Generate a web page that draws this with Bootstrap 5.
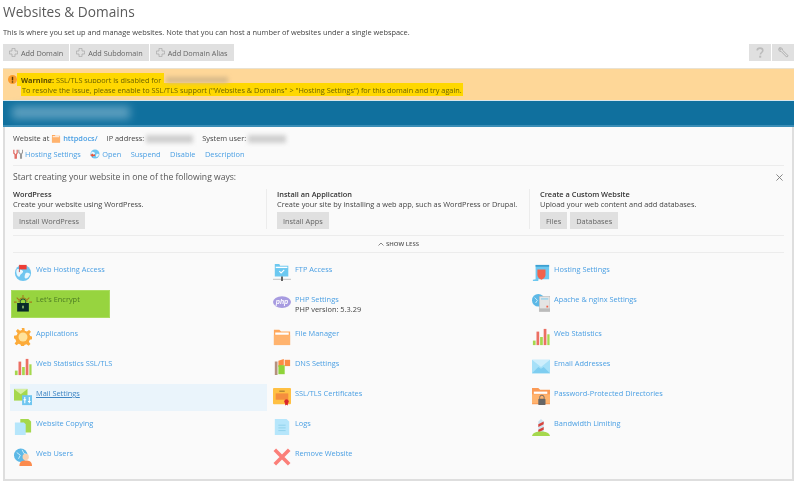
<!DOCTYPE html>
<html lang="en">
<head>
<meta charset="utf-8">
<title>Websites &amp; Domains</title>
<link href="https://cdn.jsdelivr.net/npm/bootstrap@5.3.0/dist/css/bootstrap.min.css" rel="stylesheet">
<style>
html,body{height:484px;overflow:hidden;background:#fff}
body{font-family:"Open Sans","Liberation Sans",sans-serif;font-size:7.4px;line-height:10px;color:#444}
.page-wrap{padding:0 6px 0 3px;filter:blur(.3px);height:484px}
a{color:#4a9fe3;text-decoration:none}
.page-title{font-size:13.7px;line-height:20px;font-weight:400;color:#5a5a5a;margin:2px 0 0}
.page-desc{margin:4px 0 0;line-height:12px}
.tool-row{margin-top:6px;height:17px;gap:1px}
.tool-btn{background:#e0e0e0;color:#666;height:17px;font-size:7.3px;line-height:10px;padding:0 6px;border:0;border-radius:0;display:inline-flex;align-items:center;gap:3px}
.tool-btn svg{flex:none}
.sq-btn{width:22px;justify-content:center;padding:0}
.warn-box{margin-top:7px;height:32px;background:#fed798;border-top:1px solid #e9e2d2;padding:5px 0 0 5px;gap:4px;font-size:7.35px}
.warn-ic{flex:none;margin-top:1px}
.warn-hl{background:#ffd800;color:#6d6300;padding:1.5px 1px}
.warn-first{padding-left:4px;margin-left:-4px}
.warn-lines{line-height:10.3px}
.warn-lines b{font-weight:700;color:#5a4a00}
.blue-bar{height:27px;background:#10709e;border-top:1px solid #d9e6ec;border-bottom:2px solid #3a8db6;padding:5px 0 0 9px}
.blur-name{display:inline-block;width:118px;height:13px;background:#7db3cd;filter:blur(4px);opacity:.7}
.blur-ip{display:inline-block;width:47px;height:8px;background:#cfcfcf;filter:blur(2px);vertical-align:middle}
.blur-usr{display:inline-block;width:38px;height:8px;background:#cfcfcf;filter:blur(2px);vertical-align:middle}
.blur-dom{display:inline-block;width:62px;height:6px;background:#d7b98a;filter:blur(2px);vertical-align:middle;margin-left:2px}
.main-panel{height:354px;background:#fafafa;border-left:2px solid #dedede;border-right:2px solid #dedede;border-bottom:2px solid #dedede;padding:0 8px;width:791px}
.info-row{height:12px;padding-top:5px;box-sizing:content-box;gap:9px;align-items:center}
.act-row{margin-top:4px;height:12px;gap:9.500px;align-items:center}
.act-row a,.info-row a{display:inline-flex;align-items:center;gap:2px}
.strong-link{font-weight:600}
.rule{border-top:1px solid #ececec;margin:5px 0 0;opacity:1}
.start-head{font-size:8.6px;line-height:12px;color:#555;margin:5px 0 0;height:12px}
.close-x{width:7px;height:7px;margin-right:1px;margin-top:3px}
.start-row{margin-top:6px;height:40px}
.start-col{padding:0;border-left:1px solid #ececec;padding-left:10px}
.start-col:first-child{border-left:0;padding-left:0}
.col-a{width:253px}.col-b{width:263px}.col-c{flex:1}
.start-col h6{font-size:7.4px;line-height:10px;font-weight:600;color:#333;margin:0}
.start-col p{margin:0;line-height:10px}
.soft-btn{background:#e0e0e0;color:#666;font-size:7.4px;line-height:10px;height:17px;padding:0 6px;border:0;border-radius:0;margin-top:3px;margin-right:3px}
.show-row{height:18px;border-top:1px solid #ececec;border-bottom:1px solid #ececec;margin-top:6px;font-size:6px;font-weight:600;color:#555;line-height:15px;gap:2px}
.tile-grid{margin:0 -3px;padding-top:5px}
.tile{height:30px;padding:6px 0 0 4px;display:flex;gap:4px;align-items:flex-start;line-height:10px}
.tile-tall{height:34px}
.tile svg{width:18px;height:18px;flex:none}
.tile-col{width:259.900px;padding-right:1px}
.tile-green{background:#97d43f;width:99px;margin-left:1px;height:28px;padding:3px 0 0 2px;margin-top:2px;margin-bottom:4px;border:1px solid #a9dc5f}
.tile-green a{color:#4c7b23}
.tile-hover{background:#eaf4fb;height:27px;padding-top:4px;margin:2px 1.500px 1px 0}
.tile-hover a{text-decoration:underline;color:#3f86c4}
</style>
</head>
<body>
<svg width="0" height="0" class="position-absolute">
<defs>
<symbol id="plus" viewBox="0 0 12 12"><path d="M4 .5h4v3.500h3.500v4H8v3.500H4V8H.5V4H4z" fill="none" stroke="#aaa"/></symbol>
<symbol id="globe" viewBox="0 0 20 20"><circle cx="10" cy="10" r="9" fill="#6fc6f0"/><path d="M3 6c3-1 4 0 6 1s1 3-1 4-1 4-3 3-3-5-2-8zM13 10c2-1 4 0 5 1-1 3-3 5-5 5s-1-4 0-6z" fill="#eaf7fd"/></symbol>
<symbol id="folder" viewBox="0 0 20 20"><path d="M1 2h6l2 2h10v15H1z" fill="#ffa75b"/><rect x="2.500" y="5" width="15" height="2.500" fill="#fff"/><rect x="1" y="8" width="18" height="11" fill="#ffb36e"/></symbol>
<symbol id="bars" viewBox="0 0 20 20"><rect x="1" y="14" width="3" height="5" fill="#a5d84d"/><rect x="5" y="4" width="3" height="15" fill="#ec6f63"/><rect x="9" y="10" width="3" height="9" fill="#a5d84d"/><rect x="13" y="1" width="3" height="18" fill="#ec6f63"/><rect x="17" y="7" width="2.500" height="12" fill="#a5d84d"/></symbol>
</defs>
</svg>
<div class="page-wrap">
<h1 class="page-title">Websites &amp; Domains</h1>
<p class="page-desc">This is where you set up and manage websites. Note that you can host a number of websites under a single webspace.</p>
<div class="tool-row d-flex">
<button class="btn tool-btn" type="button"><svg width="9" height="9"><use href="#plus"/></svg>Add Domain</button>
<button class="btn tool-btn" type="button"><svg width="9" height="9"><use href="#plus"/></svg>Add Subdomain</button>
<button class="btn tool-btn" type="button"><svg width="9" height="9"><use href="#plus"/></svg>Add Domain Alias</button>
<div class="ms-auto d-flex tool-row mt-0">
<button class="btn tool-btn sq-btn" type="button" aria-label="Help"><svg width="8" height="11" viewBox="0 0 10 13"><path d="M1.500 4c0-4 7-4 7 0 0 2.500-3 2.500-3 5" fill="none" stroke="#bbb" stroke-width="2"/><rect x="4" y="10.500" width="2.500" height="2.500" fill="#bbb"/></svg></button>
<button class="btn tool-btn sq-btn" type="button" aria-label="Settings"><svg width="11" height="11" viewBox="0 0 12 12"><path d="M1.500 1c2-.8 3.500.5 3.200 2.300L11 9.500 9.500 11 3.300 4.700C1.500 5 .2 3.500 1 1.500L2.800 3.200 3.300 2.700z" fill="none" stroke="#aaa"/></svg></button>
</div>
</div>
<div class="warn-box d-flex">
<svg class="warn-ic" width="9" height="9" viewBox="0 0 10 10"><circle cx="5" cy="5" r="5" fill="#fb9d2f"/><rect x="4.200" y="2" width="1.600" height="4" fill="#5a3a00"/><rect x="4.200" y="7" width="1.600" height="1.500" fill="#5a3a00"/></svg>
<div class="warn-lines">
<div><span class="warn-hl warn-first"><b>Warning:</b> SSL/TLS support is disabled for&nbsp;</span><span class="blur-dom"></span></div>
<div><span class="warn-hl">To resolve the issue, please enable to SSL/TLS support ("Websites &amp; Domains" &gt; "Hosting Settings") for this domain and try again.</span></div>
</div>
</div>
<div class="blue-bar"><span class="blur-name"></span></div>
<div class="main-panel">
<div class="info-row d-flex">
<span>Website at <svg width="10" height="9" viewBox="0 0 20 18"><use href="#folder"/></svg> <a class="strong-link" href="#">httpdocs/</a></span>
<span>IP address: <span class="blur-ip"></span></span>
<span>System user: <span class="blur-usr"></span></span>
</div>
<div class="act-row d-flex">
<a href="#"><svg width="10" height="10" viewBox="0 0 12 12"><path d="M1 1v4l1.500 1.500V11h1.500V6.500L5 5V1" fill="none" stroke="#e0645c" stroke-width="1.400"/><path d="M7 1v3l2 2v5h1.200V6l1.300-2V1" fill="none" stroke="#999" stroke-width="1.300"/></svg>Hosting Settings</a>
<a href="#"><svg width="10" height="10" viewBox="0 0 20 20"><use href="#globe"/><path d="M0 12l6-3v2h4v3H6v2z" fill="#e8563c"/></svg>Open</a>
<a href="#">Suspend</a><a href="#">Disable</a><a href="#">Description</a>
</div>
<hr class="rule">
<div class="start-head d-flex justify-content-between">
<span>Start creating your website in one of the following ways:</span>
<svg class="close-x" viewBox="0 0 8 8"><path d="M.5.500l7 7M7.500.500l-7 7" stroke="#777" fill="none"/></svg>
</div>
<div class="start-row d-flex">
<div class="start-col col-a"><h6>WordPress</h6><p>Create your website using WordPress.</p><button class="btn soft-btn" type="button">Install WordPress</button></div>
<div class="start-col col-b"><h6>Install an Application</h6><p>Create your site by installing a web app, such as WordPress or Drupal.</p><button class="btn soft-btn" type="button">Install Apps</button></div>
<div class="start-col col-c"><h6>Create a Custom Website</h6><p>Upload your web content and add databases.</p><button class="btn soft-btn" type="button">Files</button><button class="btn soft-btn" type="button">Databases</button></div>
</div>
<div class="show-row d-flex justify-content-center align-items-center">
<svg width="6" height="4" viewBox="0 0 6 4"><path d="M.5 3.500L3 1l2.500 2.500" fill="none" stroke="#888"/></svg><span>SHOW LESS</span>
</div>
<div class="tile-grid d-flex">
<div class="tile-col">
<div class="tile"><svg viewBox="0 0 20 20"><use href="#globe"/><path d="M6 9V1" stroke="#b55" stroke-width="1"/><path d="M6 1h8v5H6z" fill="#ee3d35"/></svg><a href="#">Web Hosting Access</a></div>
<div class="tile tile-green"><svg viewBox="0 0 20 20"><path d="M10 1v3M3 4l2.500 2.500M17 4l-2.500 2.500M0 9h3M17 9h3" stroke="#a5781d" stroke-width="1.200"/><path d="M5.500 9a4.500 4.500 0 0 1 9 0" fill="none" stroke="#a5781d" stroke-width="1.200"/><path d="M7 10V8.500a3 3 0 0 1 6 0V10" fill="none" stroke="#143"/><rect x="3.500" y="10" width="13" height="9.500" fill="#08282a"/><rect x="9.300" y="13" width="1.400" height="3" fill="#b8e986"/></svg><a href="#">Let's Encrypt</a></div>
<div class="tile"><svg viewBox="0 0 20 20"><path d="M8.500 0h3l.5 3 2.300 1 2.500-1.800 2 2-1.800 2.500 1 2.300 2.500.5v3l-3 .5-1 2.300 1.800 2.500-2 2-2.500-1.800-2.300 1-.5 2.500h-3l-.5-3-2.300-1-2.500 1.800-2-2 1.800-2.500-1-2.300L0 11.500v-3l3-.5 1-2.300-1.800-2.500 2-2 2.500 1.800 2.300-1z" fill="#fcab3a"/><circle cx="10" cy="10" r="5" fill="#ffe29a"/></svg><a href="#">Applications</a></div>
<div class="tile"><svg viewBox="0 0 20 20"><use href="#bars"/></svg><a href="#">Web Statistics SSL/TLS</a></div>
<div class="tile tile-hover"><svg viewBox="0 0 20 20"><path d="M0 1h15v13H0z" fill="#a5d84d"/><path d="M0 1l7.500 6L15 1z" fill="#d5eea3"/><rect x="9" y="8" width="11" height="11" fill="#6fc6f0"/><path d="M12 10v7M17 10v7M10.500 13h3M15.500 15h3" stroke="#fff" stroke-width="1.200"/></svg><a href="#">Mail Settings</a></div>
<div class="tile"><svg viewBox="0 0 20 20"><path d="M7 1h9l3 3v12H7z" fill="#a5d84d"/><path d="M1 5h10l2 2v12H1z" fill="#b6e6fb"/></svg><a href="#">Website Copying</a></div>
<div class="tile"><svg viewBox="0 0 20 20"><circle cx="7.500" cy="8" r="7.500" fill="#5cb8e6"/><path d="M3 5l4 3-2 4M9 2l2 4 3 1" stroke="#d4effb" fill="none"/><circle cx="13" cy="10" r="3.500" fill="#f7d2b3"/><path d="M6 20c0-5 3-6 7-6s7 1 7 6z" fill="#fb8b4e"/></svg><a href="#">Web Users</a></div>
</div>
<div class="tile-col">
<div class="tile"><svg viewBox="0 0 20 20"><path d="M2 0h5l1 2h9v12H2z" fill="#6cc8f0"/><rect x="3" y="3" width="13" height="1.500" fill="#fff"/><path d="M7 8l2 2 3.500-3.500" stroke="#fff" fill="none" stroke-width="1.200"/><path d="M0 17h20" stroke="#bbb"/><path d="M10 14v5" stroke="#555" stroke-width="2"/></svg><a href="#">FTP Access</a></div>
<div class="tile tile-tall"><svg viewBox="0 0 20 20"><ellipse cx="10" cy="9" rx="10" ry="6.500" fill="#a79be0"/><text x="10" y="11.500" text-anchor="middle" font-size="7.500" font-style="italic" font-weight="700" fill="#fff" font-family="Liberation Sans, sans-serif">php</text></svg><div><a href="#">PHP Settings</a><div class="tile-sub">PHP version: 5.3.29</div></div></div>
<div class="tile"><svg viewBox="0 0 20 20"><use href="#folder"/></svg><a href="#">File Manager</a></div>
<div class="tile"><svg viewBox="0 0 20 20"><path d="M2 4h3v15H2zM14 4h2v5h-2z" fill="#b4917e"/><path d="M6 3l6-2v7l-6 2z" fill="#fb8c45"/><path d="M13 2h6v7h-6z" fill="#fb8c45"/><path d="M6 8h7v10H6z" fill="#8fd33a"/></svg><a href="#">DNS Settings</a></div>
<div class="tile"><svg viewBox="0 0 20 20"><rect x="0" y="0" width="20" height="18" rx="1" fill="#ffc043"/><rect x="3" y="6" width="14" height="7" fill="#f58e3e"/><rect x="7" y="3" width="6" height="1" fill="#8a6a2c"/><circle cx="15" cy="15" r="2.500" fill="#d8262c"/><path d="M13.500 16.500v3l1.500-1 1.500 1v-3z" fill="#d8262c"/></svg><a href="#">SSL/TLS Certificates</a></div>
<div class="tile"><svg viewBox="0 0 20 20"><path d="M2 1h13l3 3v15H2z" fill="#b6e6fb"/><path d="M6 8h8M6 11h8M6 14h8" stroke="#8ccfea"/></svg><a href="#">Logs</a></div>
<div class="tile"><svg viewBox="0 0 20 20"><path d="M2 2l16 16M18 2L2 18" stroke="#fb7f79" stroke-width="4"/></svg><a href="#">Remove Website</a></div>
</div>
<div class="tile-col">
<div class="tile"><svg viewBox="0 0 20 20"><path d="M4 1h15v16H7v2H1v-1.500l3-.5z" fill="#6cc8f0"/><rect x="4" y="1" width="15" height="2" fill="#3d9fd1"/><path d="M6 6h9v6c0 3-3 5-4.500 5.500C9 17 6 15 6 12z" fill="#f2624b"/></svg><a href="#">Hosting Settings</a></div>
<div class="tile tile-tall"><svg viewBox="0 0 20 20"><circle cx="7" cy="7" r="7" fill="#5cb8e6"/><path d="M3 4l3 3-2 3" stroke="#d4effb" fill="none"/><rect x="8" y="2.500" width="12" height="17" fill="#e4e4e4" stroke="#aaa" stroke-width=".5"/><rect x="10" y="5" width="8" height="1" fill="#6cc8f0"/><rect x="8" y="16" width="12" height="3.500" fill="#bbb"/><rect x="16" y="13" width="2" height="2" fill="#f2624b"/></svg><a href="#">Apache &amp; nginx Settings</a></div>
<div class="tile"><svg viewBox="0 0 20 20"><use href="#bars"/></svg><a href="#">Web Statistics</a></div>
<div class="tile"><svg viewBox="0 0 20 20"><path d="M0 2h20v15H0z" fill="#a6e0f8"/><path d="M0 2l10 8 10-8" fill="#cdeefc"/><path d="M0 17l7-7 3 2 3-2 7 7z" fill="#7ecdf0"/></svg><a href="#">Email Addresses</a></div>
<div class="tile"><svg viewBox="0 0 20 20"><path d="M0 0h7l2 2h11v16H0z" fill="#fb9a55"/><rect x="2" y="4" width="15" height="2.500" fill="#fff"/><rect x="0" y="7" width="20" height="10" fill="#ffb36e"/><rect x="7" y="12" width="8" height="7" rx="1" fill="#666"/><path d="M8.500 12v-1.500a2.500 2.500 0 0 1 5 0V12" stroke="#666" fill="none"/></svg><a href="#">Password-Protected Directories</a></div>
<div class="tile"><svg viewBox="0 0 20 20"><path d="M7 4l3-3 3 3v12H7z" fill="#cfe3ef"/><path d="M7 7l6-3v3l-6 3zM7 13l6-3v3l-6 3z" fill="#d8433c"/><path d="M0 20c1-4 5-5 10-5s9 1 10 5z" fill="#a5d84d"/></svg><a href="#">Bandwidth Limiting</a></div>
</div>
</div>
</div>
</div>
</body>
</html>
